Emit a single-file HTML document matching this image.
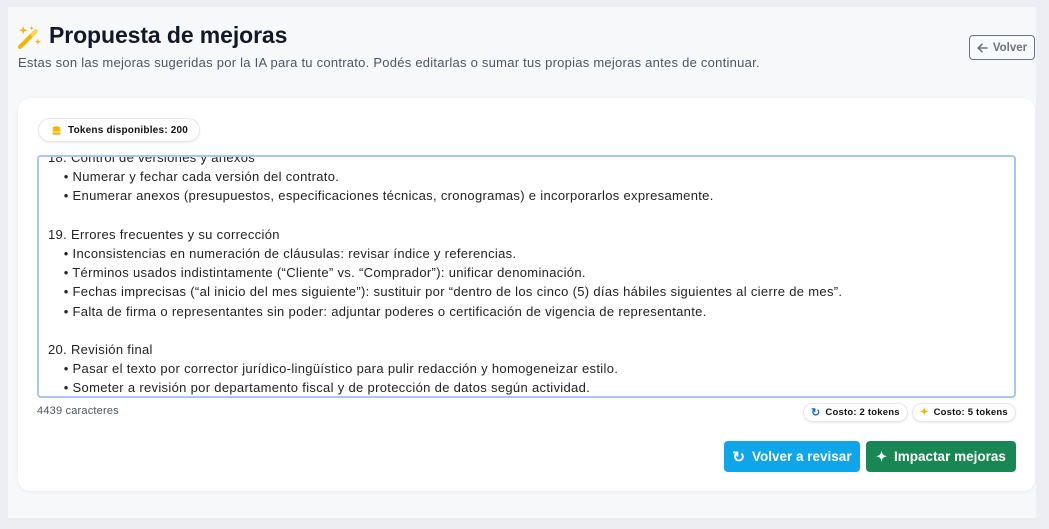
<!DOCTYPE html>
<html><head><meta charset="utf-8"><style>
*{box-sizing:border-box;margin:0;padding:0}
body{width:1049px;height:529px;background:#eceef3;font-family:"Liberation Sans",sans-serif;position:relative;overflow:hidden}
.page{position:absolute;left:8px;top:7px;width:1028px;height:511px;background:#f7f8fa}
h1{position:absolute;left:49px;top:22px;font-size:23px;font-weight:bold;color:#111827;letter-spacing:-0.1px}
.sub{position:absolute;left:18px;top:55px;font-size:13px;color:#4b5563;letter-spacing:0.25px}
.back{position:absolute;left:969px;top:35px;width:66px;height:25px;border:1px solid #6b7280;border-radius:4px;font-size:11.5px;font-weight:bold;color:#6b7280;display:flex;align-items:center;justify-content:center;gap:5px;background:#f8f9fb}
.card{position:absolute;left:18px;top:98px;width:1017px;height:393px;background:#fff;border-radius:12px;box-shadow:0 1px 4px rgba(0,0,0,.06)}
.pill{position:absolute;border:1px solid #e5e7eb;border-radius:12px;background:#fff;font-size:10px;font-weight:bold;color:#111;display:flex;align-items:center;gap:6px;box-shadow:0 1px 2px rgba(0,0,0,.08);letter-spacing:0.2px}
.ta{position:absolute;left:37px;top:155px;width:979px;height:243px;border:2px solid #a9c5f5;border-radius:4px;overflow:hidden;background:#fff}
.inner{position:absolute;left:9px;top:-9px;font-size:13px;line-height:19.2px;color:#222;white-space:pre;letter-spacing:0.32px}
.count{position:absolute;left:37px;top:405px;font-size:11px;color:#4b5563;letter-spacing:0.2px}
.btn{position:absolute;top:441px;height:31px;border-radius:4px;color:#fff;font-size:13.5px;font-weight:bold;display:flex;align-items:center;justify-content:center;gap:7px}
</style></head><body>
<div class="page"></div>
<svg style="position:absolute;left:17px;top:25px" width="25" height="25" viewBox="0 0 24 24"><path d="M3 21 L16 8" stroke="#f5b400" stroke-width="4" stroke-linecap="round"/><path d="M15 9 L18 6" stroke="#ffd24d" stroke-width="4" stroke-linecap="round"/><path d="M6 1l1 3 3 1-3 1-1 3-1-3-3-1 3-1z" fill="#f5b400"/><path d="M20 13l.8 2.2 2.2.8-2.2.8-.8 2.2-.8-2.2-2.2-.8 2.2-.8z" fill="#f5b400"/><path d="M14 1l.6 1.4 1.4.6-1.4.6-.6 1.4-.6-1.4-1.4-.6 1.4-.6z" fill="#f5b400"/></svg>
<h1>Propuesta de mejoras</h1>
<div class="sub">Estas son las mejoras sugeridas por la IA para tu contrato. Podés editarlas o sumar tus propias mejoras antes de continuar.</div>
<div class="back"><svg width="11" height="10" viewBox="0 0 11 10"><path d="M10 5H1.5M5 1.2L1.2 5 5 8.8" stroke="#6b7280" stroke-width="1.6" fill="none" stroke-linecap="round"/></svg>Volver</div>
<div class="card"></div>
<div class="pill" style="left:38px;top:118px;height:24px;padding:0 11px 0 12px"><svg width="11" height="11" viewBox="0 0 11 11"><ellipse cx="5.5" cy="3" rx="4" ry="1.6" fill="#f5b400"/><rect x="1.5" y="4.2" width="8" height="2.4" rx="1" fill="#f5b400"/><rect x="1.5" y="7.4" width="8" height="2.4" rx="1" fill="#f5b400"/></svg>Tokens disponibles: 200</div>
<div class="ta"><div class="inner">18. Control de versiones y anexos
    • Numerar y fechar cada versión del contrato.
    • Enumerar anexos (presupuestos, especificaciones técnicas, cronogramas) e incorporarlos expresamente.

19. Errores frecuentes y su corrección
    • Inconsistencias en numeración de cláusulas: revisar índice y referencias.
    • Términos usados indistintamente (“Cliente” vs. “Comprador”): unificar denominación.
    • Fechas imprecisas (“al inicio del mes siguiente”): sustituir por “dentro de los cinco (5) días hábiles siguientes al cierre de mes”.
    • Falta de firma o representantes sin poder: adjuntar poderes o certificación de vigencia de representante.

20. Revisión final
    • Pasar el texto por corrector jurídico-lingüístico para pulir redacción y homogeneizar estilo.
    • Someter a revisión por departamento fiscal y de protección de datos según actividad.</div></div>
<div class="count">4439 caracteres</div>
<div class="pill" style="left:803px;top:403px;height:19px;padding:0 7px;font-size:9.5px;gap:5px"><span style="color:#2563eb;font-size:11px">↻</span>Costo: 2 tokens</div>
<div class="pill" style="left:912px;top:403px;height:19px;padding:0 7px;font-size:9.5px;gap:5px"><span style="color:#f5b400;font-size:10px">✦</span>Costo: 5 tokens</div>
<div class="btn" style="left:724px;width:136px;background:#0ea5e9"><span style="font-size:15px">↻</span>Volver a revisar</div>
<div class="btn" style="left:866px;width:150px;background:#198754"><span style="font-size:13px">✦</span>Impactar mejoras</div>
</body></html>
